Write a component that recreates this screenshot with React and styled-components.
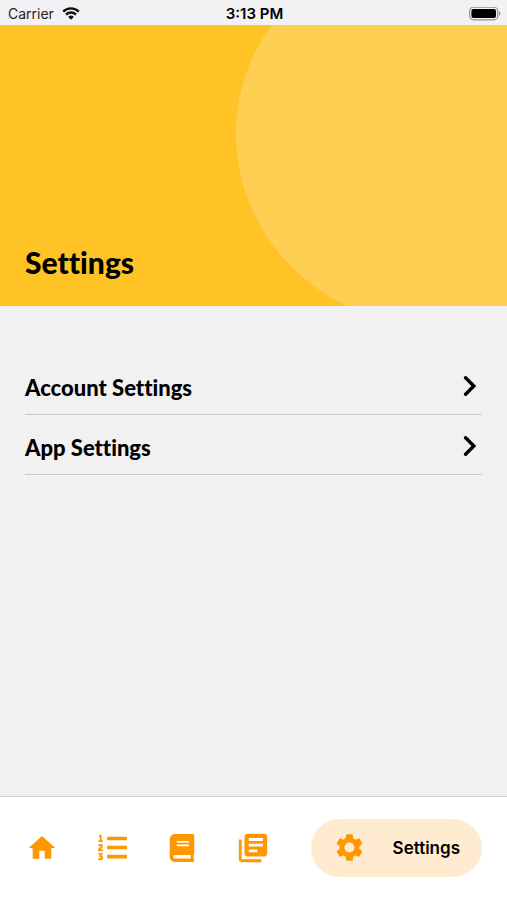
import styled, { createGlobalStyle } from "styled-components";
import { FaBook, FaListOl } from "react-icons/fa";
import { MdHome, MdLibraryBooks, MdSettings } from "react-icons/md";

const rows = ["Account Settings", "App Settings"];

const tabs = [
  { label: "Home", icon: <MdHome size={32} /> },
  { label: "Lists", icon: <FaListOl size={29} /> },
  { label: "Book", icon: <FaBook size={28} /> },
  { label: "Library", icon: <MdLibraryBooks size={34} /> },
];

const App = () => {
  return (
    <Screen>
      <GlobalStyle />
      <StatusBar>
        <Carrier>
          Carrier
          <svg width="18" height="14" viewBox="0 0 18 14" fill="none" stroke="#111" strokeWidth="2.4">
            <path d="M1.2 4.6a11 11 0 0 1 15.6 0" />
            <path d="M4 7.6a7.1 7.1 0 0 1 10 0" />
            <path d="M9 12.8 6.2 9.9a4 4 0 0 1 5.6 0z" fill="#111" stroke="none" />
          </svg>
        </Carrier>
        <Time>3:13 PM</Time>
        <Battery>
          <svg width="32" height="14" viewBox="0 0 32 14">
            <rect x="0.7" y="0.2" width="28" height="12.6" rx="3.8" fill="#f4f4f6" stroke="#909094" strokeWidth="1.2" />
            <rect x="2.4" y="1.9" width="24.6" height="9.2" rx="2" fill="#000" />
            <path d="M30 4.3c1.8.6 1.8 3.8 0 4.4z" fill="#909094" />
          </svg>
        </Battery>
      </StatusBar>

      <Header>
        <Circle />
        <h1>Settings</h1>
      </Header>

      <List>
        {rows.map((name) => (
          <li key={name}>
            <Row type="button">
              {name}
              <svg width="14" height="22" viewBox="0 0 14 22" fill="none" stroke="#000" strokeWidth="3.4" strokeLinecap="round">
                <path d="M2.6 1.8 10.8 10l-8.2 8.2" />
              </svg>
            </Row>
          </li>
        ))}
      </List>

      <TabBar>
        <Tabs>
          {tabs.map(({ label, icon }) => (
            <Tab key={label} type="button" aria-label={label}>
              {icon}
            </Tab>
          ))}
        </Tabs>
        <ActiveTab type="button">
          <MdSettings size={33} />
          <span>Settings</span>
        </ActiveTab>
      </TabBar>
    </Screen>
  );
};

export default App;

const GlobalStyle = createGlobalStyle`
  * {
    box-sizing: border-box;
  }
  body {
    margin: 0;
    background: #f1f1f1;
    color: #000;
    font-family: Inter, "Liberation Sans", sans-serif;
  }
  button {
    border: none;
    background: none;
    padding: 0;
    color: inherit;
    font-family: inherit;
    cursor: pointer;
  }
  svg {
    display: block;
    flex-shrink: 0;
  }
`;

const Screen = styled.div`
  min-height: 100vh;
  display: flex;
  flex-direction: column;
`;

const StatusBar = styled.div`
  display: grid;
  grid-template-columns: 1fr auto 1fr;
  align-items: center;
  height: 25px;
  padding: 2px 6px 0 8px;
  background: #f2f2f4;
  font-size: 14px;
`;

const Carrier = styled.span`
  display: flex;
  align-items: center;
  gap: 8px;
  color: #222;
`;

const Time = styled.span`
  font-size: 15px;
  font-weight: 600;
`;

const Battery = styled.span`
  justify-self: end;
`;

const Header = styled.header`
  position: relative;
  overflow: hidden;
  display: flex;
  align-items: flex-end;
  height: 281px;
  padding: 0 25px 25px;
  background: #ffc326;
  h1 {
    position: relative;
    margin: 0;
    font-family: Lato, sans-serif;
    font-size: 30px;
    line-height: 38px;
    font-weight: 900;
    font-variant-ligatures: none;
  }
`;

const Circle = styled.div`
  position: absolute;
  top: -83px;
  right: -129px;
  width: 400px;
  height: 384px;
  border-radius: 50%;
  background: #ffcf54;
`;

const List = styled.ul`
  flex: 1;
  margin: 0;
  padding: 49px 25px;
  list-style: none;
`;

const Row = styled.button`
  display: flex;
  align-items: center;
  justify-content: space-between;
  width: 100%;
  height: 60px;
  padding: 5px 5px 0 0;
  border-bottom: 1px solid #c8c8c8;
  font-family: Lato, sans-serif;
  font-size: 22px;
  font-weight: 900;
  font-variant-ligatures: none;
`;

const TabBar = styled.nav`
  display: flex;
  align-items: center;
  gap: 41px;
  height: 104px;
  padding: 0 25px 2px 26px;
  border-top: 1px solid #d0d0d0;
  background: #fff;
`;

const Tabs = styled.div`
  flex: 1;
  display: flex;
  align-items: center;
  justify-content: space-between;
`;

const Tab = styled.button`
  color: #ff9800;
`;

const ActiveTab = styled.button`
  display: flex;
  align-items: center;
  justify-content: space-between;
  width: 171px;
  height: 58px;
  padding: 0 22px;
  border-radius: 29px;
  background: #ffebcf;
  font-size: 17px;
  font-weight: 600;
  svg {
    color: #ff9800;
  }
`;
